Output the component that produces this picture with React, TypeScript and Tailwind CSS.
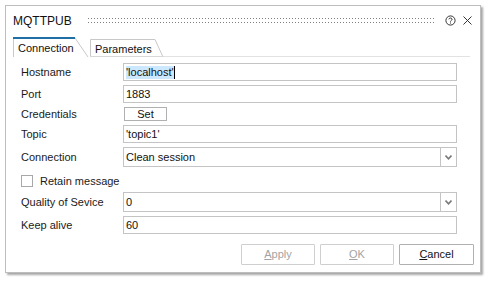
import React from "react";

type FieldRowProps = {
  label: string;
  children: React.ReactNode;
  className?: string;
};

function FieldRow(props: FieldRowProps) {
  const { label, children, className } = props;
  return (
    <div className={`flex items-center pl-[15px] pr-[23px] ${className ?? ""}`}>
      <div className="w-[102px] shrink-0 text-[11px] leading-[13px] text-[#1a1a1a]">{label}</div>
      <div className="flex-1">{children}</div>
    </div>
  );
}

function TextBox({ value }: { value: React.ReactNode }) {
  return (
    <div className="h-[18px] border border-[#c4c4c4] bg-white flex items-center pl-[2px] text-[11px] text-[#111]">
      {value}
    </div>
  );
}

function Chevron() {
  return (
    <svg width="7" height="5" viewBox="0 0 7 5">
      <path d="M0.5 0.5 L3.5 3.8 L6.5 0.5" fill="none" stroke="#7a7a7a" strokeWidth="1.6" />
    </svg>
  );
}

function SelectBox({ value }: { value: string }) {
  return (
    <div className="h-[20px] border border-[#c4c4c4] bg-white flex items-stretch text-[11px] text-[#111]">
      <div className="flex-1 flex items-center pl-[2px]">{value}</div>
      <div className="w-[16px] border-l border-[#c4c4c4] flex items-center justify-center">
        <Chevron />
      </div>
    </div>
  );
}

function DialogButton({
  label,
  hotkey,
  disabled,
  className,
}: {
  label: string;
  hotkey: string;
  disabled?: boolean;
  className?: string;
}) {
  return (
    <button
      type="button"
      className={`h-[21px] border rounded-[1px] text-[11px] flex items-center justify-center ${
        disabled ? "border-[#cfcfcf] text-[#a3a3a3]" : "border-[#b0b0b0] text-[#111]"
      } ${className ?? ""}`}
    >
      <span className="underline underline-offset-[1px]">{hotkey}</span>
      {label.slice(1)}
    </button>
  );
}

function App() {
  return (
    <div
      className="w-[490px] h-[286px] bg-white pl-[5px] pt-[5px]"
      style={{ fontFamily: '"Liberation Sans", Arial, sans-serif' }}
    >
      <div className="w-[476px] h-[268px] border border-[#bdbdbd] bg-white shadow-[2px_2px_2px_rgba(0,0,0,0.35)] flex flex-col">
        {/* title bar */}
        <div className="h-[29px] flex items-center pl-[7px] pr-[8px]">
          <span className="text-[12px] text-[#111]">MQTTPUB</span>
          <svg className="ml-[16px]" width="348" height="6">
            <defs>
              <pattern id="grip" width="3" height="4" patternUnits="userSpaceOnUse">
                <rect x="0" y="0" width="1" height="1" fill="#7e7e7e" />
              </pattern>
            </defs>
            <rect width="348" height="6" fill="url(#grip)" />
          </svg>
          <svg className="ml-[10px]" width="11" height="11" viewBox="0 0 11 11">
            <circle cx="5.5" cy="5.5" r="4.6" fill="none" stroke="#333" strokeWidth="1" />
            <path d="M3.9 4.3 C3.9 2.6 7.1 2.6 7.1 4.3 C7.1 5.5 5.5 5.4 5.5 6.6" fill="none" stroke="#333" strokeWidth="1" />
            <rect x="5" y="7.5" width="1" height="1" fill="#333" />
          </svg>
          <svg className="ml-[7px]" width="9" height="9" viewBox="0 0 9 9">
            <path d="M0.5 0.5 L8.5 8.5 M8.5 0.5 L0.5 8.5" stroke="#333" strokeWidth="1" />
          </svg>
        </div>

        {/* tabs */}
        <div className="mt-[2px] h-[20px] flex items-end pl-[7px]">
          <div className="relative w-[76px] h-[20px] shrink-0">
            <svg className="absolute inset-0" width="76" height="20">
              <path d="M0.5 20 V1 H62 L75 20" fill="none" stroke="#c8c8c8" />
              <rect x="0" y="0" width="62" height="2" fill="#1f6fa6" />
            </svg>
            <span className="absolute left-[5px] top-[3px] text-[11px] text-[#111]">Connection</span>
          </div>
          <div className="relative w-[74px] h-[18px] shrink-0 ml-[1px]">
            <svg className="absolute inset-0" width="74" height="18">
              <path d="M0.5 18 V0.5 H65 L73 18" fill="none" stroke="#c8c8c8" />
              <line x1="0" y1="17.5" x2="74" y2="17.5" stroke="#d8d8d8" />
            </svg>
            <span className="absolute left-[5px] top-[2px] text-[11px] text-[#111]">Parameters</span>
          </div>
          <div className="flex-1 h-[20px] border-b border-[#e2e2e2] mr-[10px]" />
        </div>

        {/* fields */}
        <FieldRow label="Hostname" className="mt-[6px]">
          <TextBox
            value={
              <span className="flex items-center">
                <span className="bg-[#cce8ff] leading-[13px]">'localhost'</span>
                <span className="w-px h-[13px] bg-black" />
              </span>
            }
          />
        </FieldRow>
        <FieldRow label="Port" className="mt-[4px]">
          <TextBox value="1883" />
        </FieldRow>
        <FieldRow label="Credentials" className="mt-[4px]">
          <button
            type="button"
            className="ml-[1px] w-[43px] h-[14px] border border-[#b0b0b0] text-[11px] leading-[12px] text-[#111] flex items-center justify-center"
          >
            Set
          </button>
        </FieldRow>
        <FieldRow label="Topic" className="mt-[4px]">
          <TextBox value="'topic1'" />
        </FieldRow>
        <FieldRow label="Connection" className="mt-[4px]">
          <SelectBox value="Clean session" />
        </FieldRow>

        <div className="mt-[8px] pl-[15px] flex items-center h-[12px]">
          <div className="w-[12px] h-[12px] border border-[#a8a8a8] bg-white" />
          <span className="ml-[7px] text-[11px] text-[#1a1a1a]">Retain message</span>
        </div>

        <FieldRow label="Quality of Sevice" className="mt-[5px]">
          <SelectBox value="0" />
        </FieldRow>
        <FieldRow label="Keep alive" className="mt-[4px]">
          <TextBox value="60" />
        </FieldRow>

        {/* buttons */}
        <div className="mt-[10px] flex justify-end gap-[5px] pr-[6px]">
          <DialogButton label="Apply" hotkey="A" disabled className="w-[74px]" />
          <DialogButton label="OK" hotkey="O" disabled className="w-[74px]" />
          <DialogButton label="Cancel" hotkey="C" className="w-[75px]" />
        </div>
      </div>
    </div>
  );
}

export default App;
